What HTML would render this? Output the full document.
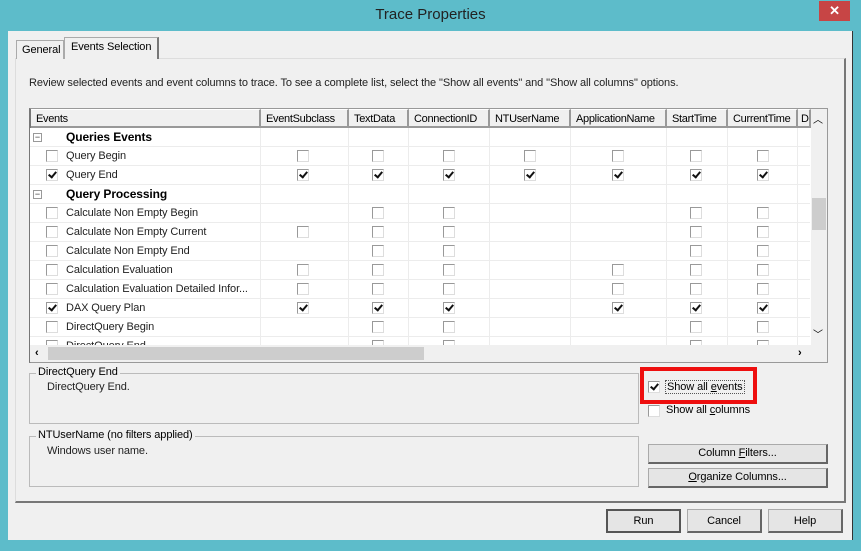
<!DOCTYPE html>
<html><head><meta charset="utf-8"><style>
*{box-sizing:border-box;margin:0;padding:0}
body{width:861px;height:551px;background:#5dbcca;font-family:"Liberation Sans",sans-serif;font-size:11px;color:#000;position:relative;overflow:hidden;letter-spacing:-0.1px}
.a{position:absolute}
.title{left:0;width:861px;top:6px;text-align:center;font-size:15px;color:#222;letter-spacing:0}
.close{left:819px;top:1px;width:31px;height:20px;background:#c74545;color:#fff;text-align:center;font-size:13px;line-height:20px;font-weight:bold}
.win{left:8px;top:31px;width:845px;height:509px;background:#f0f0f0;border-right:1px solid #333}
.tab{border:1px solid #aaa;border-bottom:none;background:#f0f0f0;padding:3px 5px 0;white-space:nowrap}
.panel{left:15px;top:58px;width:831px;height:445px;border:1px solid #ddd;border-right:2px solid #777;border-bottom:2px solid #777;background:#f0f0f0}
.grid{left:29px;top:108px;width:799px;height:255px;border:1px solid #999;border-left:2px solid #777;background:#fff}
.hd{top:109px;height:19px;background:#f0f0f0;border-right:2px solid #999;border-bottom:2px solid #999;border-top:1px solid #fff;padding:3px 0 0 5px;font-size:11px;white-space:nowrap;overflow:hidden;letter-spacing:-0.3px}
.body{left:30px;top:128px;width:780px;height:217px;overflow:hidden;background:#fff}
.vl{top:0;width:1px;height:230px;background:#ececec}
.hl{left:0;width:780px;height:1px;background:#ececec}
.t{left:36px;font-size:11px;white-space:nowrap;color:#222}
.b{left:36px;font-weight:bold;font-size:12px}
.cb{width:12px;height:12px;border:1px solid #999;border-right-color:#ddd;border-bottom-color:#ddd;background:#fff}
.k::after{content:"";position:absolute;left:3px;top:0px;width:3px;height:6px;border-right:2px solid #111;border-bottom:2px solid #111;transform:rotate(40deg)}
.mn{width:9px;height:9px;border:1px solid #999;font-size:9px;line-height:6px;text-align:center;color:#333}
.gb{border:1px solid #bbb}
.lg{background:#f0f0f0;padding:0 2px;font-size:11px}
.btn{background:#e5e5e5;border:1px solid #aaa;border-right:2px solid #666;border-bottom:2px solid #666;text-align:center;font-size:11px;line-height:17px}
</style></head><body>
<div class="a title">Trace Properties</div>
<div class="a close">✕</div>
<div class="a win"></div>
<div class="a panel"></div>
<div class="a tab" style="left:16px;top:40px;width:48px;height:19px">General</div>
<div class="a tab" style="left:64px;top:37px;width:95px;height:22px;border-right:2px solid #777;padding-left:6px">Events Selection</div>
<div class="a" style="left:29px;top:77px;color:#222">Review selected events and event columns to trace. To see a complete list, select the "Show all events" and "Show all columns" options.</div>

<div class="a grid"></div>
<div class="a hd" style="left:31px;width:230px">Events</div>
<div class="a hd" style="left:261px;width:88px">EventSubclass</div>
<div class="a hd" style="left:349px;width:60px">TextData</div>
<div class="a hd" style="left:409px;width:81px">ConnectionID</div>
<div class="a hd" style="left:490px;width:81px">NTUserName</div>
<div class="a hd" style="left:571px;width:96px">ApplicationName</div>
<div class="a hd" style="left:667px;width:61px">StartTime</div>
<div class="a hd" style="left:728px;width:70px">CurrentTime</div>
<div class="a hd" style="left:798px;width:13px;padding-left:3px">D</div>
<div class="a" style="left:811px;top:109px;width:16px;height:236px;background:#f0f0f0"></div>
<div class="a" style="left:813px;top:111px;font-size:10px">︿</div>
<div class="a" style="left:812px;top:198px;width:14px;height:32px;background:#cdcdcd"></div>
<div class="a" style="left:813px;top:326px;font-size:10px">﹀</div>
<div class="a" style="left:30px;top:345px;width:797px;height:17px;background:#f0f0f0"></div>
<div class="a" style="left:48px;top:347px;width:376px;height:13px;background:#cdcdcd"></div>
<div class="a" style="left:35px;top:347px;font-weight:bold">‹</div>
<div class="a" style="left:798px;top:347px;font-weight:bold">›</div>

<div class="a body">
<div class="a vl" style="left:230px"></div><div class="a vl" style="left:318px"></div><div class="a vl" style="left:378px"></div><div class="a vl" style="left:459px"></div><div class="a vl" style="left:540px"></div><div class="a vl" style="left:636px"></div><div class="a vl" style="left:697px"></div><div class="a vl" style="left:767px"></div>
<div class="a hl" style="top:18px"></div><div class="a hl" style="top:37px"></div><div class="a hl" style="top:56px"></div><div class="a hl" style="top:75px"></div><div class="a hl" style="top:94px"></div><div class="a hl" style="top:113px"></div><div class="a hl" style="top:132px"></div><div class="a hl" style="top:151px"></div><div class="a hl" style="top:170px"></div><div class="a hl" style="top:189px"></div><div class="a hl" style="top:208px"></div>
<div class="a mn" style="left:3px;top:5px">−</div><div class="a b" style="top:2px">Queries Events</div>
<div class="a cb" style="left:16px;top:22px"></div><div class="a t" style="top:22px">Query Begin</div>
<div class="a cb" style="left:267px;top:22px"></div><div class="a cb" style="left:342px;top:22px"></div><div class="a cb" style="left:413px;top:22px"></div><div class="a cb" style="left:494px;top:22px"></div><div class="a cb" style="left:582px;top:22px"></div><div class="a cb" style="left:660px;top:22px"></div><div class="a cb" style="left:727px;top:22px"></div>
<div class="a cb k" style="left:16px;top:41px"></div><div class="a t" style="top:41px">Query End</div>
<div class="a cb k" style="left:267px;top:41px"></div><div class="a cb k" style="left:342px;top:41px"></div><div class="a cb k" style="left:413px;top:41px"></div><div class="a cb k" style="left:494px;top:41px"></div><div class="a cb k" style="left:582px;top:41px"></div><div class="a cb k" style="left:660px;top:41px"></div><div class="a cb k" style="left:727px;top:41px"></div>
<div class="a mn" style="left:3px;top:62px">−</div><div class="a b" style="top:59px">Query Processing</div>
<div class="a cb" style="left:16px;top:79px"></div><div class="a t" style="top:79px">Calculate Non Empty Begin</div>
<div class="a cb" style="left:342px;top:79px"></div><div class="a cb" style="left:413px;top:79px"></div><div class="a cb" style="left:660px;top:79px"></div><div class="a cb" style="left:727px;top:79px"></div>
<div class="a cb" style="left:16px;top:98px"></div><div class="a t" style="top:98px">Calculate Non Empty Current</div>
<div class="a cb" style="left:267px;top:98px"></div><div class="a cb" style="left:342px;top:98px"></div><div class="a cb" style="left:413px;top:98px"></div><div class="a cb" style="left:660px;top:98px"></div><div class="a cb" style="left:727px;top:98px"></div>
<div class="a cb" style="left:16px;top:117px"></div><div class="a t" style="top:117px">Calculate Non Empty End</div>
<div class="a cb" style="left:342px;top:117px"></div><div class="a cb" style="left:413px;top:117px"></div><div class="a cb" style="left:660px;top:117px"></div><div class="a cb" style="left:727px;top:117px"></div>
<div class="a cb" style="left:16px;top:136px"></div><div class="a t" style="top:136px">Calculation Evaluation</div>
<div class="a cb" style="left:267px;top:136px"></div><div class="a cb" style="left:342px;top:136px"></div><div class="a cb" style="left:413px;top:136px"></div><div class="a cb" style="left:582px;top:136px"></div><div class="a cb" style="left:660px;top:136px"></div><div class="a cb" style="left:727px;top:136px"></div>
<div class="a cb" style="left:16px;top:155px"></div><div class="a t" style="top:155px">Calculation Evaluation Detailed Infor...</div>
<div class="a cb" style="left:267px;top:155px"></div><div class="a cb" style="left:342px;top:155px"></div><div class="a cb" style="left:413px;top:155px"></div><div class="a cb" style="left:582px;top:155px"></div><div class="a cb" style="left:660px;top:155px"></div><div class="a cb" style="left:727px;top:155px"></div>
<div class="a cb k" style="left:16px;top:174px"></div><div class="a t" style="top:174px">DAX Query Plan</div>
<div class="a cb k" style="left:267px;top:174px"></div><div class="a cb k" style="left:342px;top:174px"></div><div class="a cb k" style="left:413px;top:174px"></div><div class="a cb k" style="left:582px;top:174px"></div><div class="a cb k" style="left:660px;top:174px"></div><div class="a cb k" style="left:727px;top:174px"></div>
<div class="a cb" style="left:16px;top:193px"></div><div class="a t" style="top:193px">DirectQuery Begin</div>
<div class="a cb" style="left:342px;top:193px"></div><div class="a cb" style="left:413px;top:193px"></div><div class="a cb" style="left:660px;top:193px"></div><div class="a cb" style="left:727px;top:193px"></div>
<div class="a cb" style="left:16px;top:212px"></div><div class="a t" style="top:212px">DirectQuery End</div>
<div class="a cb" style="left:342px;top:212px"></div><div class="a cb" style="left:413px;top:212px"></div><div class="a cb" style="left:660px;top:212px"></div><div class="a cb" style="left:727px;top:212px"></div>
</div>

<div class="a gb" style="left:29px;top:373px;width:610px;height:51px"></div>
<div class="a lg" style="left:36px;top:366px">DirectQuery End</div>
<div class="a" style="left:47px;top:381px;color:#222">DirectQuery End.</div>
<div class="a gb" style="left:29px;top:436px;width:610px;height:51px"></div>
<div class="a lg" style="left:36px;top:429px">NTUserName (no filters applied)</div>
<div class="a" style="left:47px;top:445px;color:#222">Windows user name.</div>

<div class="a" style="left:640px;top:367px;width:117px;height:37px;border:4px solid #ee0f0f"></div>
<div class="a cb k" style="left:648px;top:381px"></div>
<div class="a" style="left:665px;top:380px;border:1px dotted #555;padding:0 1px">Show all <u>e</u>vents</div>
<div class="a cb" style="left:648px;top:405px"></div>
<div class="a" style="left:666px;top:404px">Show all <u>c</u>olumns</div>
<div class="a btn" style="left:648px;top:444px;width:180px;height:20px">Column <u>F</u>ilters...</div>
<div class="a btn" style="left:648px;top:468px;width:180px;height:20px"><u>O</u>rganize Columns...</div>
<div class="a btn" style="left:606px;top:509px;width:75px;height:24px;line-height:20px;border:2px solid #555">Run</div>
<div class="a btn" style="left:687px;top:509px;width:75px;height:24px;line-height:22px">Cancel</div>
<div class="a btn" style="left:768px;top:509px;width:75px;height:24px;line-height:22px">Help</div>
</body></html>
